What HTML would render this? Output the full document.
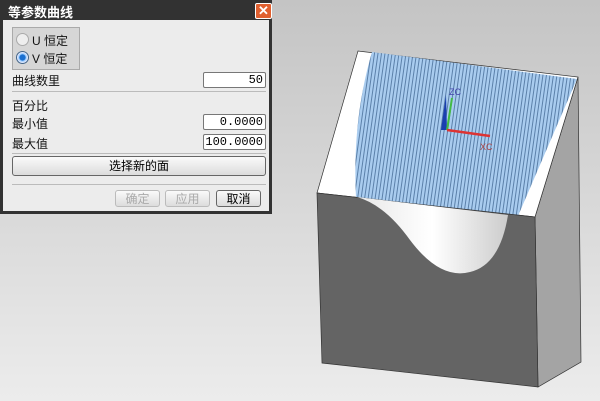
<!DOCTYPE html><html><head><meta charset="utf-8"><style>
body{margin:0;width:600px;height:401px;overflow:hidden;background:linear-gradient(#c4c4c4,#d8d8d8 50%,#ececec);font-family:"Liberation Sans","Noto Sans CJK SC",sans-serif;font-size:12px;position:relative}
.dlg{position:absolute;left:0;top:0;width:272px;height:214px;background:#323232}
.title{position:absolute;left:8px;top:2px;color:#fff;font-weight:bold;font-size:13px}
.x{position:absolute;left:255px;top:3px;width:15px;height:14px;background:#e06030;border:1px solid #fff;border-radius:2px;color:#fff;font-size:13px;line-height:13px;text-align:center;font-weight:bold}
.body{position:absolute;left:3px;top:20px;width:266px;height:191px;background:#ececec}
.a{position:absolute;color:#111}
.box{position:absolute;background:#fff;border:1px solid #777;border-radius:2px;text-align:right;font-family:"Liberation Mono",monospace;font-size:12px;line-height:14px;padding-right:2px;box-sizing:border-box}
.btn{position:absolute;border:1px solid #666;border-radius:3px;background:linear-gradient(#fafafa,#dcdcdc);text-align:center;line-height:16px;box-sizing:border-box}
.hr{position:absolute;left:9px;width:254px;border-top:1px solid #bbb}
</style></head><body>
<div class="dlg"><div class="title">等参数曲线</div><div class="x">✕</div>
<div class="body">
<div style="position:absolute;left:9px;top:7px;width:66px;height:41px;background:#d6d6d6;border:1px solid #aaa"></div>
<div style="position:absolute;left:13px;top:13px;width:11px;height:11px;border:1px solid #aaa;border-radius:50%;background:#eee"></div>
<div class="a" style="left:29px;top:12px">U 恒定</div>
<div style="position:absolute;left:13px;top:31px;width:11px;height:11px;border:1px solid #468;border-radius:50%;background:radial-gradient(#1a6fd0 35%,#9cf 45%,#eef 70%)"></div>
<div class="a" style="left:29px;top:30px">V 恒定</div>
<div class="a" style="left:9px;top:52px">曲线数里</div>
<div class="box" style="left:200px;top:52px;width:63px;height:16px">50</div>
<div class="hr" style="top:71px"></div>
<div class="a" style="left:9px;top:77px">百分比</div>
<div class="a" style="left:9px;top:95px">最小值</div>
<div class="box" style="left:200px;top:94px;width:63px;height:16px">0.0000</div>
<div class="a" style="left:9px;top:115px">最大值</div>
<div class="box" style="left:200px;top:114px;width:63px;height:16px">100.0000</div>
<div class="hr" style="top:133px"></div>
<div class="btn" style="left:9px;top:136px;width:254px;height:20px;line-height:18px">选择新的面</div>
<div class="hr" style="top:164px"></div>
<div class="btn" style="left:112px;top:170px;width:45px;height:17px;color:#aaa;border-color:#bbb">确定</div>
<div class="btn" style="left:162px;top:170px;width:45px;height:17px;color:#aaa;border-color:#bbb">应用</div>
<div class="btn" style="left:213px;top:170px;width:45px;height:17px">取消</div>
</div></div>
<svg style="position:absolute;left:0;top:0" width="600" height="401">
<defs><pattern id="s" width="3.5" height="10" patternUnits="userSpaceOnUse" patternTransform="skewX(-8)"><rect width="4" height="10" fill="#a9ccef"/><rect width="1" height="10" fill="#5a7fa8"/></pattern>
<linearGradient id="g" x1="0" x2="1"><stop offset="0" stop-color="#e8e8e8"/><stop offset=".5" stop-color="#fff"/><stop offset="1" stop-color="#ccc"/></linearGradient></defs>
<polygon points="535,217 578,77 581,362 538,387" fill="#a4a4a4" stroke="#333" stroke-width=".7"/>
<polygon points="317,193 358,51 578,77 535,217" fill="#fff" stroke="#333" stroke-width=".7"/>
<path d="M372,52 L577,79 L518,216 L356,198 Q352,120 372,52Z" fill="url(#s)"/>
<polygon points="317,193 535,217 538,387 322,363" fill="#646464" stroke="#333" stroke-width=".7"/>
<path d="M357,197 Q385,205 410,240 Q440,280 470,272 Q500,265 508,215Z" fill="url(#g)"/>
<path d="M446,95 L441,130 L447,130Z" fill="#1a3fb0"/><path d="M452,98 L447,130" stroke="#4b4" stroke-width="2"/>
<path d="M447,130 L490,136" stroke="#d33" stroke-width="2.5"/>
<text x="449" y="95" font-size="9" fill="#44a">ZC</text><text x="480" y="150" font-size="9" fill="#a44">XC</text>
</svg>
</body></html>
